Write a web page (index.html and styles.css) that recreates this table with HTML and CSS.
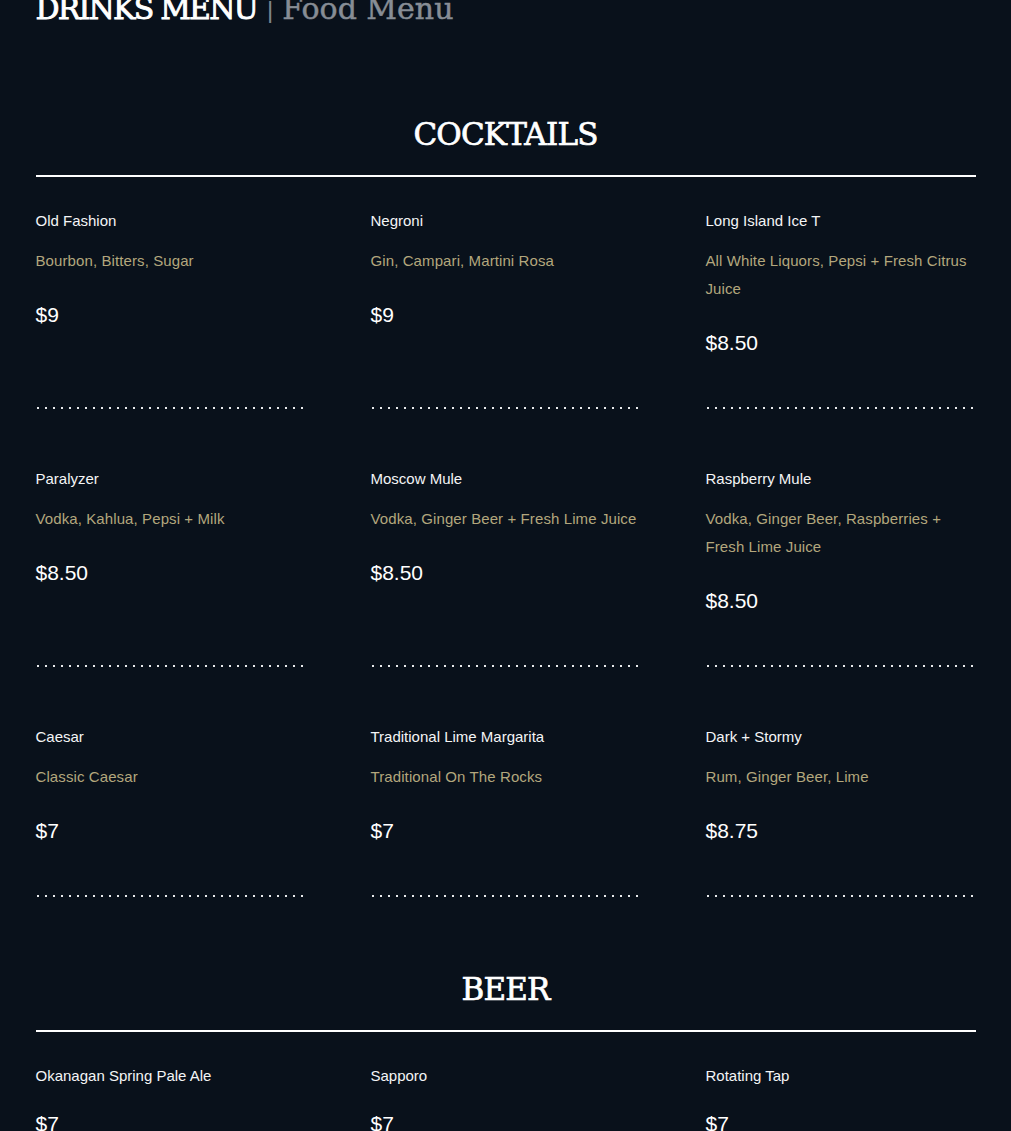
FILE: index.html
```html
<!DOCTYPE html>
<html lang="en">
<head>
<meta charset="utf-8">
<title>Drinks Menu</title>
<link rel="stylesheet" href="styles.css">
</head>
<body>
<div class="page">
  <header class="top">
    <h1 class="title"><span class="title-main">DRINKS MENU</span><span class="title-sep">|</span><a class="title-alt" href="#">Food Menu</a></h1>
  </header>

  <section class="section section-first">
    <h2 class="section-title">COCKTAILS</h2>
    <div class="grid">
      <div class="item">
        <div class="item-name">Old Fashion</div>
        <div class="item-desc">Bourbon, Bitters, Sugar</div>
        <div class="item-price">$9</div>
        <div class="item-dots"></div>
      </div>
      <div class="item">
        <div class="item-name">Negroni</div>
        <div class="item-desc">Gin, Campari, Martini Rosa</div>
        <div class="item-price">$9</div>
        <div class="item-dots"></div>
      </div>
      <div class="item">
        <div class="item-name">Long Island Ice T</div>
        <div class="item-desc">All White Liquors, Pepsi + Fresh Citrus Juice</div>
        <div class="item-price">$8.50</div>
        <div class="item-dots"></div>
      </div>
      <div class="item">
        <div class="item-name">Paralyzer</div>
        <div class="item-desc">Vodka, Kahlua, Pepsi + Milk</div>
        <div class="item-price">$8.50</div>
        <div class="item-dots"></div>
      </div>
      <div class="item">
        <div class="item-name">Moscow Mule</div>
        <div class="item-desc">Vodka, Ginger Beer + Fresh Lime Juice</div>
        <div class="item-price">$8.50</div>
        <div class="item-dots"></div>
      </div>
      <div class="item">
        <div class="item-name">Raspberry Mule</div>
        <div class="item-desc">Vodka, Ginger Beer, Raspberries + Fresh Lime Juice</div>
        <div class="item-price">$8.50</div>
        <div class="item-dots"></div>
      </div>
      <div class="item">
        <div class="item-name">Caesar</div>
        <div class="item-desc">Classic Caesar</div>
        <div class="item-price">$7</div>
        <div class="item-dots"></div>
      </div>
      <div class="item">
        <div class="item-name">Traditional Lime Margarita</div>
        <div class="item-desc">Traditional On The Rocks</div>
        <div class="item-price">$7</div>
        <div class="item-dots"></div>
      </div>
      <div class="item">
        <div class="item-name">Dark + Stormy</div>
        <div class="item-desc">Rum, Ginger Beer, Lime</div>
        <div class="item-price">$8.75</div>
        <div class="item-dots"></div>
      </div>
    </div>
  </section>

  <section class="section">
    <h2 class="section-title">BEER</h2>
    <div class="grid">
      <div class="item">
        <div class="item-name">Okanagan Spring Pale Ale</div>
        <div class="item-price">$7</div>
        <div class="item-dots"></div>
      </div>
      <div class="item">
        <div class="item-name">Sapporo</div>
        <div class="item-price">$7</div>
        <div class="item-dots"></div>
      </div>
      <div class="item">
        <div class="item-name">Rotating Tap</div>
        <div class="item-price">$7</div>
        <div class="item-dots"></div>
      </div>
    </div>
  </section>
</div>
</body>
</html>
```

FILE: styles.css
```css
html, body {
  margin: 0;
  padding: 0;
  background: #09111b;
}

body {
  color: #f4f5f6;
  font-family: "Liberation Sans", Arial, sans-serif;
}

.page {
  max-width: 940px;
  margin: 0 auto;
  padding-bottom: 80px;
}

.top {
  margin-top: -9px;
}

.title {
  margin: 0;
  font-family: "DejaVu Serif", serif;
  font-size: 30px;
  line-height: 36px;
  font-weight: normal;
  white-space: nowrap;
}

.title-main {
  color: #ffffff;
  letter-spacing: -1.8px;
  -webkit-text-stroke: 0.9px #ffffff;
}

.title-sep {
  display: inline-block;
  margin: 0 9px 0 10px;
  font-family: "Liberation Sans", sans-serif;
  font-size: 24px;
  color: #7d848d;
  vertical-align: 1px;
}

.title-alt {
  color: #878d95;
  text-decoration: none;
  -webkit-text-stroke: 0.5px #878d95;
}

.section {
  margin-top: 72px;
}

.section-first {
  margin-top: 86px;
}

.section-title {
  margin: 0;
  padding-bottom: 21px;
  border-bottom: 2px solid #ffffff;
  text-align: center;
  font-family: "DejaVu Serif", serif;
  font-size: 31px;
  line-height: 40px;
  font-weight: normal;
  letter-spacing: -0.8px;
  color: #ffffff;
  -webkit-text-stroke: 0.7px #ffffff;
}

.grid {
  display: grid;
  grid-template-columns: repeat(3, 270px);
  column-gap: 65px;
  row-gap: 60px;
  margin-top: 34px;
}

.item {
  display: flex;
  flex-direction: column;
}

.item-name {
  font-size: 15px;
  line-height: 20px;
  color: #f4f5f6;
  margin-bottom: 16px;
}

.item-desc {
  font-size: 15px;
  line-height: 28px;
  letter-spacing: 0.1px;
  color: #b3a77d;
  margin-bottom: 18px;
}

.item-price {
  margin-top: 8px;
  font-size: 21px;
  line-height: 28px;
  color: #ffffff;
}

.item-dots {
  margin-top: auto;
  padding-top: 50px;
  height: 2px;
  width: 268px;
  background-image: linear-gradient(to right, #e8eaec 2px, transparent 2px);
  background-size: 8px 2px;
  background-repeat: repeat-x;
  background-position: 1px bottom;
  background-clip: content-box;
}
```
